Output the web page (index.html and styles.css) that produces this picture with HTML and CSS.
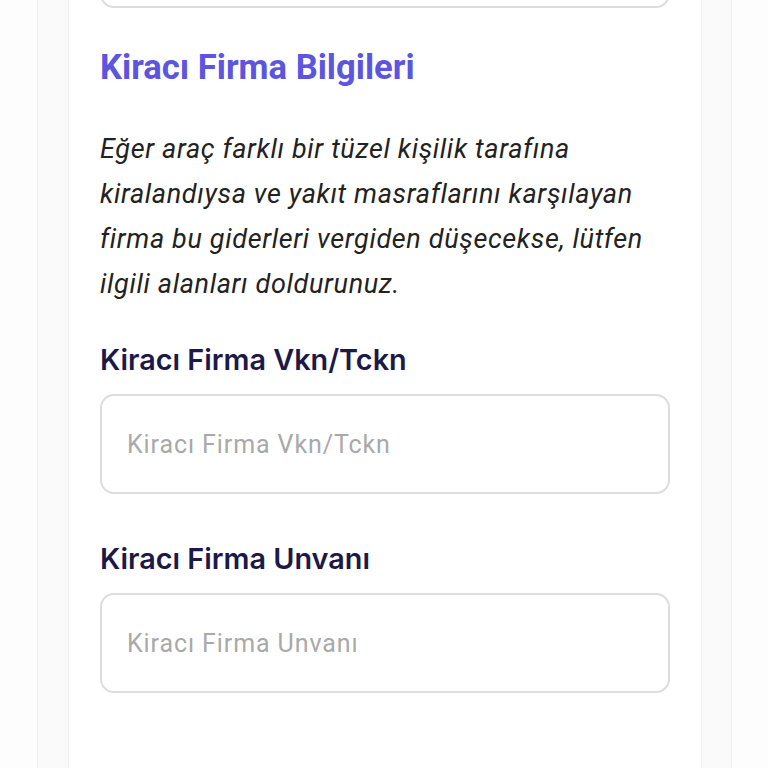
FILE: index.html
```html
<!DOCTYPE html>
<html lang="tr">
<head>
<meta charset="UTF-8">
<meta name="viewport" content="width=device-width, initial-scale=1.0">
<title>Kiracı Firma Bilgileri</title>
<link rel="stylesheet" href="styles.css">
</head>
<body>

<div class="page">
    <div class="outer">
        <div class="card">
            <!-- end of the previous field -->
            <div class="field-input prev"></div>

            <h2 class="section-title">Kiracı Firma Bilgileri</h2>

            <p class="section-note">Eğer araç farklı bir tüzel kişilik tarafına kiralandıysa ve yakıt masraflarını karşılayan firma bu giderleri vergiden düşecekse, lütfen ilgili alanları doldurunuz.</p>

            <div class="field">
                <label class="field-label" for="vkn">Kiracı Firma Vkn/Tckn</label>
                <input class="field-input" id="vkn" type="text" placeholder="Kiracı Firma Vkn/Tckn">
            </div>

            <div class="field">
                <label class="field-label" for="unvan">Kiracı Firma Unvanı</label>
                <input class="field-input" id="unvan" type="text" placeholder="Kiracı Firma Unvanı">
            </div>
        </div>
    </div>
</div>

</body>
</html>
```

FILE: styles.css
```css
body {
    font-family: Roboto, "Liberation Sans", sans-serif;
    background-color: #fdfdfd;
    color: #222;
    margin: 0;
    padding: 0;
}
.page {
    padding: 0 36px 0 37px;
    height: 768px;
    overflow: hidden;
}
.outer {
    background-color: #fafafa;
    border-left: 1px solid #eeeeee;
    border-right: 1px solid #eeeeee;
    padding: 0 29px 0 30px;
    height: 100%;
}
.card {
    background-color: #fff;
    border-left: 1px solid #f0f0f0;
    border-right: 1px solid #f0f0f0;
    padding: 0 31px;
    height: 100%;
    overflow: hidden;
}
.field-input {
    display: block;
    box-sizing: border-box;
    width: 100%;
    height: 100px;
    border: 2px solid #dddddd;
    border-radius: 14px;
    background-color: #fff;
    padding: 0 25px;
    font-family: Roboto, "Liberation Sans", sans-serif;
    font-size: 25px;
    letter-spacing: 0.9px;
    color: #222;
    outline: none;
}
.field-input::placeholder {
    color: #a9a9a9;
}
.field-input.prev {
    margin-top: -92px;
}
.section-title {
    margin: 39px 0 0;
    font-size: 34.6px;
    font-weight: 700;
    color: #5b55e0;
    line-height: 40px;
}
.section-note {
    margin: 40px 0 0;
    font-size: 27px;
    font-style: italic;
    letter-spacing: 0.65px;
    line-height: 45px;
    color: #222;
}
.field {
    margin-top: 36px;
}
.field + .field {
    margin-top: 48px;
}
.field-label {
    display: block;
    font-family: Inter, "Liberation Sans", sans-serif;
    font-size: 28.8px;
    font-weight: 600;
    color: #1c1948;
    line-height: 34px;
    margin-bottom: 17px;
}
```
